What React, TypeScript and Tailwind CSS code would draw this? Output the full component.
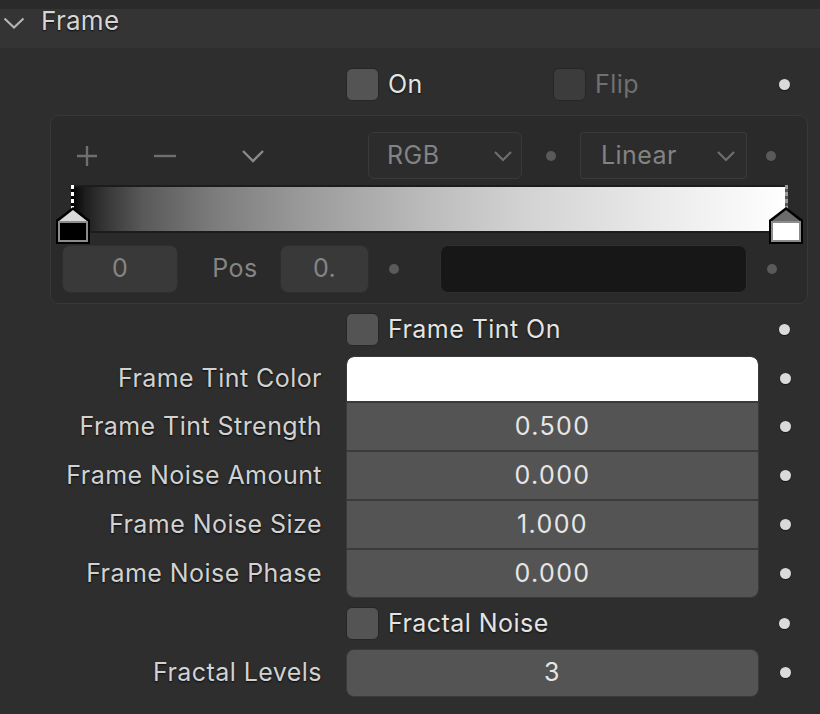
import React from "react";

const font = { fontFamily: "Inter, 'Noto Sans', sans-serif" };

function Dot({ dim = false }: { dim?: boolean }) {
  return (
    <div
      className={
        dim
          ? "w-[10px] h-[10px] rounded-full bg-[#5a5a5a]"
          : "w-[11px] h-[11px] rounded-full bg-[#dadada] shadow-[0_1px_1px_rgba(0,0,0,0.5)]"
      }
    />
  );
}

function Checkbox({ disabled = false }: { disabled?: boolean }) {
  return (
    <div
      className={
        disabled
          ? "w-[33px] h-[33px] rounded-[6px] bg-[#3c3c3c] border border-[#262626]"
          : "w-[33px] h-[33px] rounded-[6px] bg-[#545454] border border-[#262626]"
      }
    />
  );
}

const txt = "text-[25px] tracking-[0.45px]";

function CheckRow({ label }: { label: string }) {
  return (
    <div className="flex items-center h-[49px]">
      <div className="w-[346px]" />
      <Checkbox />
      <span className={"ml-[9px] text-[#e4e4e4] [text-shadow:0_1px_2px_rgba(0,0,0,0.7)] " + txt}>
        {label}
      </span>
      <div className="flex-1" />
      <div className="w-[72px] flex justify-center">
        <Dot />
      </div>
    </div>
  );
}

function Chevron({ className = "" }: { className?: string }) {
  return (
    <svg width="20" height="12" viewBox="0 0 20 12" className={className}>
      <polyline points="2,2 10,10 18,2" fill="none" stroke="currentColor" strokeWidth="2.2" />
    </svg>
  );
}

function Handle({ active }: { active: boolean }) {
  const tri = active ? "#d9d9d9" : "#6b6b6b";
  const fill = active ? "#000000" : "#ffffff";
  return (
    <svg width="34" height="37" viewBox="0 0 34 37">
      <polygon points="17,0 34,13 34,37 0,37 0,13" fill="#000" />
      <polygon points="17,3 31,14 31,20 3,20 3,14" fill={tri} />
      <rect x="2" y="14" width="30" height="21" fill="#8c8c8c" />
      <rect x="4" y="16" width="26" height="17" fill={fill} />
    </svg>
  );
}

function DashLine({ light }: { light: boolean }) {
  return (
    <svg width="3" height="24" viewBox="0 0 3 24">
      <rect x="0" y="0" width="3" height="24" fill={light ? "#000" : "#555"} />
      <line
        x1="1.5"
        y1="0"
        x2="1.5"
        y2="24"
        stroke={light ? "#ffffff" : "#9a9a9a"}
        strokeWidth="3"
        strokeDasharray="4 3"
      />
    </svg>
  );
}

function ColorRamp() {
  return (
    <div className="ml-[50px] w-[758px] h-[189px] mt-[6px] rounded-[9px] bg-[#2a2a2a] border border-[#383838] flex flex-col">
      {/* toolbar */}
      <div className="flex items-center h-[47px] mt-[16px] text-[#7a7a7a]">
        <div className="w-[25px]" />
        <svg width="22" height="22" viewBox="0 0 22 22">
          <path d="M11 1 V21 M1 11 H21" stroke="#6f6f6f" strokeWidth="2.4" />
        </svg>
        <div className="w-[55px]" />
        <svg width="24" height="22" viewBox="0 0 24 22">
          <path d="M1 11 H23" stroke="#6f6f6f" strokeWidth="2.4" />
        </svg>
        <div className="w-[64px]" />
        <svg width="24" height="14" viewBox="0 0 24 14">
          <polyline points="2,2 12,12 22,2" fill="none" stroke="#8a8a8a" strokeWidth="2.4" />
        </svg>
        <div className="w-[103px]" />
        <div className={"w-[154px] h-[47px] rounded-[6px] bg-[#2c2c2c] border border-[#3a3a3a] flex items-center px-[18px] text-[#838383] " + txt}>
          <span className="flex-1">RGB</span>
          <Chevron className="text-[#6f6f6f] mr-[-10px]" />
        </div>
        <div className="w-[58px] flex justify-center">
          <Dot dim />
        </div>
        <div className={"w-[167px] h-[47px] rounded-[3px] bg-[#2c2c2c] border border-[#3a3a3a] flex items-center px-[20px] text-[#838383] " + txt}>
          <span className="flex-1">Linear</span>
          <Chevron className="text-[#6f6f6f] mr-[-10px]" />
        </div>
        <div className="w-[48px] flex justify-center">
          <Dot dim />
        </div>
      </div>
      {/* gradient */}
      <div className="relative ml-[20px] mt-[6px] w-[716px] h-[48px]">
        <div className="w-full h-full border-y-2 border-[#1c1c1c] bg-[linear-gradient(to_right,#000000_0%,#1e1e1e_2%,#383838_5%,#595959_10%,#7c7c7c_20%,#999999_32%,#bcbcbc_50%,#d2d2d2_63%,#e1e1e1_75%,#f0f0f0_87%,#ffffff_100%)]" />
        <div className="absolute left-0 top-0">
          <DashLine light />
        </div>
        <div className="absolute right-[-1px] top-0">
          <DashLine light={false} />
        </div>
        <div className="absolute left-[-15px] top-[22px]">
          <Handle active />
        </div>
        <div className="absolute right-[-16px] top-[22px]">
          <Handle active={false} />
        </div>
      </div>
      {/* bottom row */}
      <div className={"flex items-center h-[48px] mt-[12px] text-[#858585] " + txt}>
        <div className="w-[11px]" />
        <div className="w-[116px] h-[48px] rounded-[8px] bg-[#393939] border border-[#2e2e2e] flex items-center justify-center">
          0
        </div>
        <div className="w-[31px]" />
        <span className="w-[52px] text-center">Pos</span>
        <div className="w-[19px]" />
        <div className="w-[89px] h-[48px] rounded-[8px] bg-[#393939] border border-[#2e2e2e] flex items-center justify-center">
          0.
        </div>
        <div className="w-[50px] flex justify-center">
          <Dot dim />
        </div>
        <div className="w-[21px]" />
        <div className="w-[307px] h-[48px] rounded-[8px] bg-[#171717] border border-[#2f2f2f]" />
        <div className="w-[50px] flex justify-center">
          <Dot dim />
        </div>
      </div>
    </div>
  );
}

const fieldRows = [
  { label: "Frame Tint Strength", value: "0.500" },
  { label: "Frame Noise Amount", value: "0.000" },
  { label: "Frame Noise Size", value: "1.000" },
  { label: "Frame Noise Phase", value: "0.000" },
];

const labelCls =
  "w-[322px] text-right text-[#d2d2d2] [text-shadow:0_1px_2px_rgba(0,0,0,0.8)] whitespace-nowrap " + txt;

const valCls = "text-[25px] tracking-[1.4px] text-[#e6e6e6]";

export default function App() {
  return (
    <div className="w-[820px] h-[714px] bg-[#2e2e2e] overflow-hidden" style={font}>
      <div className="h-[9px] bg-[#2a2a2a]" />
      {/* header */}
      <div className="h-[39px] bg-[#343434] flex items-center">
        <svg width="22" height="12" viewBox="0 0 22 12" className="ml-[3px] mb-[12px]">
          <polyline points="1.5,1.5 11,10.5 20.5,1.5" fill="none" stroke="#b4b4b4" strokeWidth="2.2" />
        </svg>
        <span className="ml-[16px] text-[26px] tracking-[0.3px] text-[#d6d6d6] [text-shadow:0_1px_2px_rgba(0,0,0,0.8)] leading-none mb-[16px]">
          Frame
        </span>
      </div>

      {/* On / Flip row */}
      <div className="flex items-center h-[49px] mt-[12px]">
        <div className="w-[346px]" />
        <div className="w-[207px] flex items-center">
          <Checkbox />
          <span className={"ml-[9px] text-[#e4e4e4] [text-shadow:0_1px_2px_rgba(0,0,0,0.7)] " + txt}>
            On
          </span>
        </div>
        <Checkbox disabled />
        <span className={"ml-[9px] text-[#707070] " + txt}>Flip</span>
        <div className="flex-1" />
        <div className="w-[72px] flex justify-center">
          <Dot />
        </div>
      </div>

      <ColorRamp />

      <div className="mt-[1px]">
        <CheckRow label="Frame Tint On" />
      </div>

      {/* fields block */}
      <div className="flex mt-[2px]">
        <div className="flex flex-col">
          <div className="h-[45px] flex items-center justify-end">
            <span className={labelCls}>Frame Tint Color</span>
          </div>
          {fieldRows.map((r) => (
            <div key={r.label} className="h-[49px] pt-[2px] flex items-center justify-end">
              <span className={labelCls}>{r.label}</span>
            </div>
          ))}
        </div>
        <div className="ml-[24px] w-[413px] rounded-[8px] overflow-hidden bg-[#3a3a3a] border border-[#3a3a3a] flex flex-col">
          <div className="h-[44px] bg-white rounded-t-[7px]" />
          {fieldRows.map((r, i) => (
            <div
              key={r.label}
              className={
                "h-[47px] mt-[2px] bg-[#545454] flex items-center justify-center " +
                valCls +
                (i === fieldRows.length - 1 ? " rounded-b-[7px]" : "")
              }
            >
              {r.value}
            </div>
          ))}
        </div>
        <div className="w-[52px] flex flex-col items-center">
          <div className="h-[45px] flex items-center">
            <Dot />
          </div>
          {fieldRows.map((r) => (
            <div key={r.label} className="h-[49px] pt-[2px] flex items-center">
              <Dot />
            </div>
          ))}
        </div>
      </div>

      <div className="mt-[1px]">
        <CheckRow label="Fractal Noise" />
      </div>

      <div className="flex items-center h-[49px]">
        <div className="h-full flex items-center justify-end">
          <span className={labelCls}>Fractal Levels</span>
        </div>
        <div className={"ml-[24px] w-[413px] h-[48px] rounded-[8px] bg-[#545454] border border-[#3a3a3a] flex items-center justify-center " + valCls}>
          3
        </div>
        <div className="w-[52px] flex justify-center">
          <Dot />
        </div>
      </div>
    </div>
  );
}
